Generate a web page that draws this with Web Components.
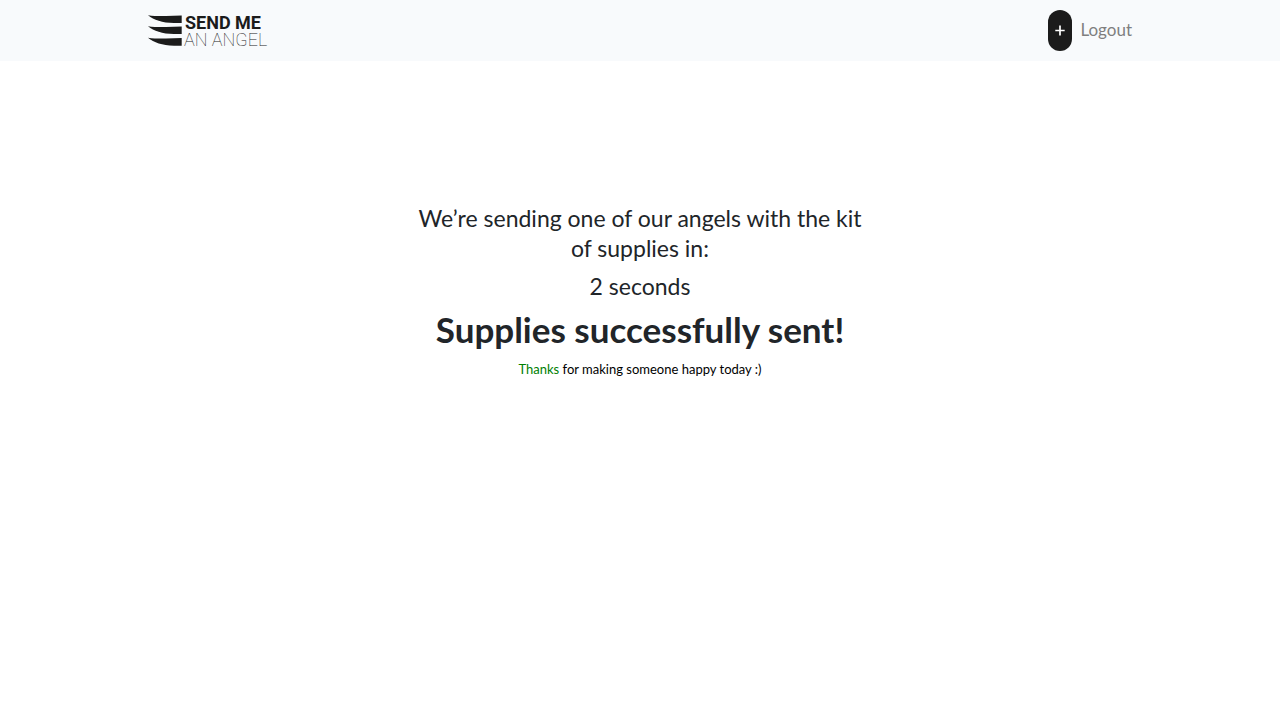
<!DOCTYPE html>
<html lang="en">
<head>
<meta charset="utf-8">
<meta name="viewport" content="width=device-width, initial-scale=1">
<title>Send me an angel</title>
<style>
body { margin: 0; background: #fff; color: #212529; font-family: Lato, "Open Sans", sans-serif; }
</style>
</head>
<body>
<angel-navbar>
  <angel-logo slot="brand"></angel-logo>
  <add-button></add-button>
  <nav-link>Logout</nav-link>
</angel-navbar>
<sent-message>
  <span slot="intro">We’re sending one of our angels with the kit of supplies in:</span>
  <span slot="time">2 seconds</span>
  <span slot="title">Supplies successfully sent!</span>
  <span slot="accent">Thanks</span>
  <span slot="note">for making someone happy today :)</span>
</sent-message>
<script>
const define = (name, html) => customElements.define(name, class extends HTMLElement {
  constructor() {
    super();
    this.attachShadow({ mode: "open" }).innerHTML = html;
  }
});

define("angel-logo", `
<style>
:host { display: block; }
a { display: flex; align-items: center; gap: 2px; color: #1b1b1b; font-family: Roboto, sans-serif; font-size: 18px; line-height: 17px; text-decoration: none; white-space: nowrap; }
svg { display: block; }
.words { display: grid; }
.bold { font-weight: 700; padding-left: 1px; }
.thin { font-weight: 100; }
</style>
<a href="#">
<svg width="34" height="33" viewBox="0 0 34 33" fill="#1b1b1b" aria-hidden="true">
  <path d="M0 1.200C5 1.900 11 2.100 18 2L33.700 1.500V9H26C14 8.700 6 6 0 1.200Z"/>
  <path d="M0 12.200C5 12.900 11 13.100 18 13L33.700 12.500V20H26C14 19.700 6 17 0 12.200Z"/>
  <path d="M0 23.700C5 24.400 11 24.600 18 24.500L33.700 24V31.700H26C14 31.400 6 28.500 0 23.700Z"/>
</svg>
<span class="words"><span class="bold">SEND ME</span><span class="thin">AN ANGEL</span></span>
</a>`);

define("add-button", `
<style>
:host { display: block; }
button { display: block; width: 24px; height: 41px; padding: 0; border: 0; border-radius: 12px; background: #1b1b1b; }
svg { display: block; margin: auto; }
</style>
<button type="button" aria-label="Add"><svg width="10" height="12" viewBox="0 0 10 12"><path d="M5 .5V10.500M.3 5.500H9.700" stroke="#fff" stroke-width="1.700"/></svg></button>`);

define("nav-link", `
<style>
:host { display: block; padding-bottom: 2px; }
a { display: block; color: #7f7f7f; font-size: 17px; line-height: 27px; text-decoration: none; }
</style>
<a href="#"><slot></slot></a>`);

define("angel-navbar", `
<style>
:host { display: block; background: #f8fafc; }
nav { display: flex; align-items: center; justify-content: space-between; max-width: 984px; margin: 0 auto; padding: 10px 16px; }
.actions { display: flex; align-items: center; gap: 8px; }
</style>
<nav><slot name="brand"></slot><div class="actions"><slot></slot></div></nav>`);

define("sent-message", `
<style>
:host { display: block; max-width: 460px; margin: 0 auto; padding: 142px 16px 0; text-align: center; }
h1, h2, h3, p { margin: 0 0 8px; }
h2, h3 { font-size: 23px; line-height: 30px; font-weight: 400; }
h1 { font-size: 35px; line-height: 40px; font-weight: 700; }
p { font-size: 13px; line-height: 24px; color: #000; }
.accent { color: green; }
</style>
<h2><slot name="intro"></slot></h2>
<h3><slot name="time"></slot></h3>
<h1><slot name="title"></slot></h1>
<p><span class="accent"><slot name="accent"></slot></span> <slot name="note"></slot></p>`);
</script>
</body>
</html>
